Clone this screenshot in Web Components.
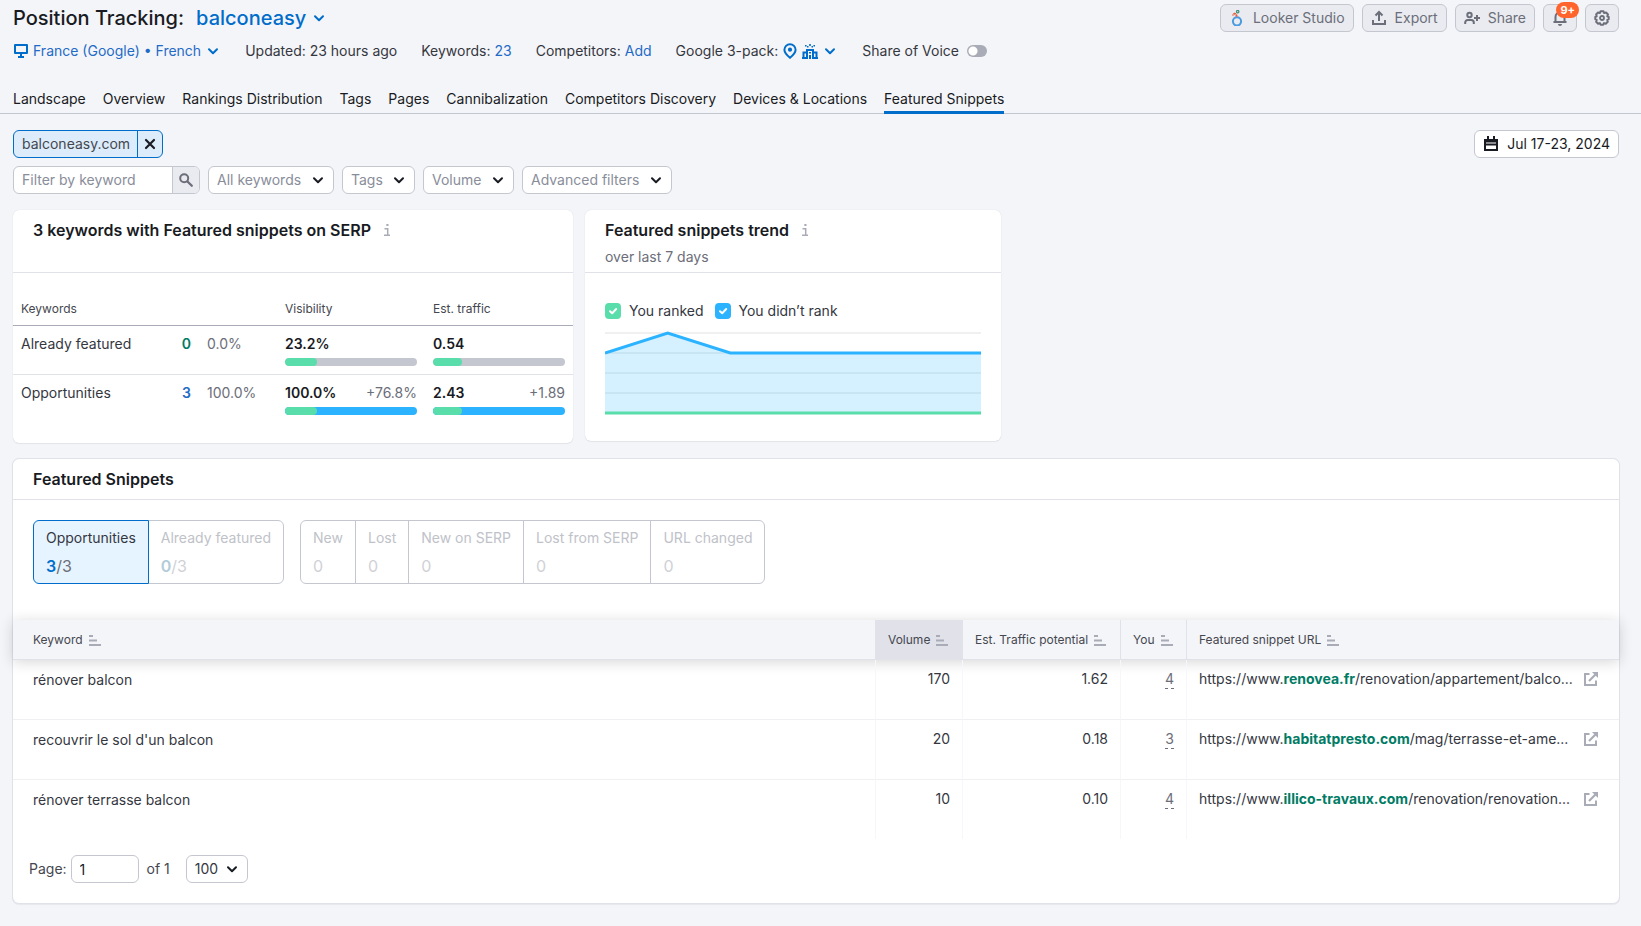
<!DOCTYPE html>
<html lang="en">
<head>
<meta charset="utf-8">
<meta name="viewport" content="width=device-width, initial-scale=1">
<title>Position Tracking: balconeasy</title>
<style>
  :root {
    --text: #191b23; --muted: #6c6e79; --hint: #898d9a; --icon: #a9abb6;
    --link: #006dca; --link-text: #1f6bc6; --line: #e0e1e9; --border: #c4c7cf; --bg: #f4f5f9;
    --green: #59ddaa; --blue: #2bb3ff; --green-text: #007c65;
  }
  body { margin: 0; background: var(--bg); color: var(--text); font: 14px/20px Inter, "Liberation Sans", sans-serif; }
</style>
</head>
<body>
<tracking-page></tracking-page>

<script>
const BASE = `
  *, *::before, *::after { box-sizing: border-box; }
  button, input, select { font: inherit; color: inherit; margin: 0; }
  button { background: none; border: 0; padding: 0; cursor: pointer; }
  a { color: var(--link-text); text-decoration: none; }
`;

function define(name, css, html, setup) {
  const template = document.createElement('template');
  template.innerHTML = `<style>${BASE}${css}</style>${html}`;
  customElements.define(name, class extends HTMLElement {
    constructor() {
      super();
      this.attachShadow({ mode: 'open' }).append(template.content.cloneNode(true));
    }
    connectedCallback() { if (setup) setup(this, this.shadowRoot); }
  });
}

const ICONS = {
  chevron: '<path d="M4 6.3 8 10.2 12 6.3" fill="none" stroke="currentColor" stroke-width="2" stroke-linecap="round" stroke-linejoin="round"/>',
  monitor: '<path d="M2 2h12v8H2z" fill="none" stroke="currentColor" stroke-width="2" stroke-linejoin="round"/><path d="M7 11h2v2h2v2H5v-2h2z" fill="currentColor"/>',
  pin: '<path d="M8 1.2a5.6 5.6 0 0 1 5.6 5.6C13.600 10.200 8 14.800 8 14.800S2.400 10.200 2.400 6.800A5.600 5.600 0 0 1 8 1.200Z" fill="none" stroke="currentColor" stroke-width="2"/><circle cx="8" cy="6.700" r="2.100" fill="currentColor"/>',
  building: '<path d="M1.500 16V9.500H5M11 9.500h3.500V16M5 16V7h6v9M0 15h6M10 15h6" fill="none" stroke="currentColor" stroke-width="2"/><path d="M7 9h2v1.500H7zM7 12h2v4H7z" fill="currentColor"/><path d="M7.200 1h1.600v2H7.200zM3 2h1.600v1.600H3zM11.400 2H13v1.600h-1.600zM5 3h1.500v1.500H5zM9.500 3H11v1.500H9.500z" fill="currentColor"/>',
  looker: '<circle cx="8" cy="11.300" r="4.100" fill="none" stroke="#4a9ae0" stroke-width="2"/><path d="M7.300 6.600C7.900 5.200 7.300 3.900 6 3.700 4.900 3.500 4 4.300 4.300 5.400" fill="none" stroke="#e8593b" stroke-width="1.900" stroke-dasharray="2.200 .6"/><circle cx="8.700" cy="1.700" r="1.200" fill="none" stroke="#3d8b78" stroke-width="1.200"/>',
  upload: '<path d="M2 10v4h12v-4M8 11V2.500M4.500 5.500 8 2l3.500 3.500" fill="none" stroke="currentColor" stroke-width="2"/>',
  share: '<circle cx="5.500" cy="5" r="2.200" fill="none" stroke="currentColor" stroke-width="2"/><path d="M1.200 14v-1.500a2.500 2.500 0 0 1 2.500-2.500h3.600a2.500 2.500 0 0 1 2.500 2.500V14M13 5v6M10 8h6" fill="none" stroke="currentColor" stroke-width="2"/>',
  bell: '<path d="M1.500 12h13M3.500 11.500V7a4.500 4.500 0 0 1 9 0v4.500" fill="none" stroke="currentColor" stroke-width="2"/><path d="M6 14h4a2 2 0 0 1-4 0z" fill="currentColor"/>',
  gear: '<path d="M6.500 1.300h3l.7 1.800 1.900-.6 1.900 2-.7 1.800 1.400.7v2.200l-1.400.7.5 1.900-2 1.900-1.800-.6-.7 1.600H6.600l-.7-1.600-1.800.6-2-1.900.6-1.900-1.400-.7V7l1.400-.7-.6-1.800 1.900-2 1.800.6z" fill="none" stroke="currentColor" stroke-width="2" stroke-linejoin="round"/><circle cx="8" cy="8" r="2" fill="none" stroke="currentColor" stroke-width="1.800"/>',
  close: '<path d="m4 4 8 8M12 4l-8 8" fill="none" stroke="currentColor" stroke-width="2.200" stroke-linecap="round"/>',
  search: '<circle cx="6.200" cy="6.200" r="4" fill="none" stroke="currentColor" stroke-width="2"/><path d="m9.500 9.500 4.300 4.300" stroke="currentColor" stroke-width="2.300" stroke-linecap="round"/>',
  calendar: '<path d="M2 4h12v10H2zM2 8.500h12" fill="none" stroke="currentColor" stroke-width="2"/><path d="M1 3h14v3.500H1zM4 0h2v4H4zM10 0h2v4h-2z" fill="currentColor"/>',
  info: '<path d="M7.300 2h2.200v2H7.300z" fill="currentColor"/><path d="M5.500 6.800h3.200v6.200M5 13.300h6" fill="none" stroke="currentColor" stroke-width="1.500"/>',
  sort: '<path d="M2 4h4M2 8.500h8M2 13h12" fill="none" stroke="currentColor" stroke-width="2"/>',
  external: '<path d="M6.500 3H2v11h11V9.500" fill="none" stroke="currentColor" stroke-width="2"/><path d="M6 10 13 3" stroke="currentColor" stroke-width="2.200"/><path d="M9 1h6v6z" fill="currentColor"/>'
};

define('ui-icon', `
  :host { display: inline-flex; flex: none; width: 16px; height: 16px; }
  svg { width: 16px; height: 16px; display: block; }
`, '<svg viewBox="0 0 16 16" aria-hidden="true"></svg>', (host, root) => {
  root.querySelector('svg').innerHTML = ICONS[host.getAttribute('name')] || '';
});

define('tool-button', `
  :host { display: block; position: relative; }
  button { display: flex; align-items: center; gap: 8px; height: 28px; padding: 0 8px; border: 1px solid var(--border); border-radius: 6px; background: #e9ebf0; color: var(--muted); white-space: nowrap; }
  :host([plain]) button { background: #fff; color: var(--text); }
  ::slotted([slot=badge]) { position: absolute; top: -2px; right: -2px; height: 16px; padding: 0 4px; border-radius: 8px; background: #ff642d; color: #fff; font: 700 11px/16px Inter, sans-serif; }
`, '<button type="button"><slot></slot></button><slot name="badge"></slot>', (host, root) => {
  const label = host.getAttribute('label');
  if (label) root.querySelector('button').setAttribute('aria-label', label);
});

define('select-box', `
  :host { display: inline-grid; align-items: center; color: var(--hint); --room: 31px; }
  :host([compact]) { --room: 28px; }
  select, ui-icon { grid-area: 1 / 1; }
  select { appearance: none; height: 28px; padding: 0 var(--room) 0 8px; border: 1px solid var(--border); border-radius: 6px; background: #fff; }
  ui-icon { justify-self: end; margin-right: 8px; color: var(--text); pointer-events: none; }
`, '<select></select><ui-icon name="chevron"></ui-icon>', (host, root) => {
  const select = root.querySelector('select');
  select.setAttribute('aria-label', host.getAttribute('label'));
  select.replaceChildren(new Option(host.getAttribute('value')));
});

define('page-header', `
  :host { display: block; padding: 4px 22px 0 13px; border-bottom: 1px solid var(--border); }
  .top, .tools, h1, .title, .meta, .item, .tabs { display: flex; align-items: center; }
  .top { justify-content: space-between; height: 28px; }
  h1 { margin: 0; font-size: 20px; line-height: 26px; font-weight: 500; gap: 12px; }
  .title { gap: 5px; font-weight: 500; color: var(--link); }
  .tools { gap: 8px; }
  .meta { gap: 24px; margin-top: 8px; line-height: 22px; white-space: nowrap; }
  .item { gap: 4px; color: #35373f; }
  .item.place { color: var(--link-text); }
  .item ui-icon { color: var(--link); }
  .switch { gap: 8px; }
  input { appearance: none; width: 20px; height: 12px; border-radius: 6px; background: radial-gradient(circle at 6px 6px, #fff 4px, #a9abb6 5px); }
  .tabs { gap: 17px; margin: 24px 0 -1px; white-space: nowrap; }
  .tabs a { height: 28px; line-height: 26px; color: var(--text); border-bottom: 3px solid transparent; }
  .tabs a[aria-current] { border-color: var(--link); }
`, `
  <div class="top">
    <h1>Position Tracking: <button class="title" type="button">balconeasy <ui-icon name="chevron"></ui-icon></button></h1>
    <div class="tools">
      <tool-button><ui-icon name="looker"></ui-icon>Looker Studio</tool-button>
      <tool-button><ui-icon name="upload"></ui-icon>Export</tool-button>
      <tool-button><ui-icon name="share"></ui-icon>Share</tool-button>
      <tool-button label="Notifications"><ui-icon name="bell"></ui-icon><span slot="badge">9+</span></tool-button>
      <tool-button label="Settings"><ui-icon name="gear"></ui-icon></tool-button>
    </div>
  </div>
  <div class="meta">
    <button class="item place" type="button"><ui-icon name="monitor"></ui-icon>France (Google) • French<ui-icon name="chevron"></ui-icon></button>
    <span class="item">Updated: 23 hours ago</span>
    <span class="item">Keywords: <a href="#keywords">23</a></span>
    <span class="item">Competitors: <a href="#competitors">Add</a></span>
    <button class="item" type="button">Google 3-pack: <ui-icon name="pin"></ui-icon><ui-icon name="building"></ui-icon><ui-icon name="chevron"></ui-icon></button>
    <label class="item switch">Share of Voice <input type="checkbox" role="switch"></label>
  </div>
  <nav class="tabs">
    <a href="#landscape">Landscape</a><a href="#overview">Overview</a><a href="#rankings">Rankings Distribution</a><a href="#tags">Tags</a><a href="#pages">Pages</a><a href="#cannibalization">Cannibalization</a><a href="#discovery">Competitors Discovery</a><a href="#devices">Devices &amp; Locations</a><a href="#snippets" aria-current="page">Featured Snippets</a>
  </nav>
`);

define('filter-bar', `
  :host { display: grid; gap: 8px; }
  .row { display: flex; align-items: center; gap: 8px; }
  .row > tool-button { margin-left: auto; }
  .chip { display: flex; height: 28px; line-height: 26px; border: 1px solid var(--link); border-radius: 6px; background: #dcecfa; color: #45474f; }
  .chip span { padding: 0 7px 0 8px; }
  .chip button { display: flex; align-items: center; padding: 0 4px; border-left: 1px solid var(--link); color: var(--text); }
  form { display: flex; height: 28px; border: 1px solid var(--border); border-radius: 6px; background: #fff; overflow: hidden; }
  input { width: 158px; border: 0; padding: 0 8px; background: none; outline: 0; }
  input::placeholder { color: var(--hint); opacity: 1; }
  form button { display: flex; align-items: center; padding: 0 5px; border-left: 1px solid var(--border); background: #e9ebf0; color: var(--muted); }
`, `
  <div class="row">
    <div class="chip"><span>balconeasy.com</span><button type="button" aria-label="Remove balconeasy.com"><ui-icon name="close"></ui-icon></button></div>
    <tool-button plain><ui-icon name="calendar"></ui-icon>Jul 17-23, 2024</tool-button>
  </div>
  <div class="row">
    <form><input type="text" placeholder="Filter by keyword" aria-label="Filter by keyword"><button type="button" aria-label="Search"><ui-icon name="search"></ui-icon></button></form>
    <select-box label="Keywords" value="All keywords"></select-box>
    <select-box label="Tags" value="Tags"></select-box>
    <select-box label="Volume" value="Volume"></select-box>
    <select-box label="Advanced filters" value="Advanced filters"></select-box>
  </div>
`);

define('info-card', `
  :host { display: block; background: #fff; border-radius: 6px; box-shadow: 0 0 1px rgba(25,27,35,.16), 0 1px 1px rgba(25,27,35,.06); }
  header { height: 63px; padding: 10px 20px 0; border-bottom: 1px solid var(--line); }
  h2 { display: flex; align-items: center; gap: 8px; margin: 0; font-size: 16px; line-height: 20px; font-weight: 600; }
  ui-icon { color: var(--icon); }
  p { margin: 7px 0 0; color: var(--muted); }
`, `<header><h2><slot name="title"></slot><ui-icon name="info"></ui-icon></h2><p><slot name="note"></slot></p></header><slot></slot>`);

define('share-bar', `
  :host { display: flex; height: 8px; margin-top: 4px; border-radius: 4px; overflow: hidden; background: var(--border); }
  :host([filled]) { background: var(--blue); }
  span { border-radius: 4px; background: var(--green); }
`, '<span></span>', (host, root) => { root.querySelector('span').style.width = host.getAttribute('value') + '%'; });

define('keyword-summary', `
  :host { display: block; padding: 20px 0; }
  table { width: 100%; table-layout: fixed; border-collapse: separate; border-spacing: 0; }
  th { height: 33px; padding: 0 8px; font-size: 12px; font-weight: 400; text-align: left; color: #45474f; border-bottom: 1px solid #a9abb6; }
  td { padding: 8px; vertical-align: top; border-bottom: 1px solid var(--line); color: #35373f; }
  tr:last-child td { border: 0; }
  .count { width: 30px; } .part { width: 78px; } .metric { width: 148px; }
  td.count { text-align: right; font-weight: 600; color: var(--green-text); }
  td.count.new { color: var(--link-text); }
  td.part, .gain { color: var(--muted); font-weight: 400; }
  b { display: flex; justify-content: space-between; font-weight: 600; color: var(--text); }
`, `
  <table>
    <thead><tr><th>Keywords</th><th class="count"></th><th class="part"></th><th class="metric">Visibility</th><th class="metric">Est. traffic</th></tr></thead>
    <tbody>
      <tr><td>Already featured</td><td class="count">0</td><td class="part">0.0%</td><td><b>23.2%</b><share-bar value="24"></share-bar></td><td><b>0.54</b><share-bar value="22"></share-bar></td></tr>
      <tr><td>Opportunities</td><td class="count new">3</td><td class="part">100.0%</td><td><b>100.0% <span class="gain">+76.8%</span></b><share-bar filled value="24"></share-bar></td><td><b>2.43 <span class="gain">+1.89</span></b><share-bar filled value="22"></share-bar></td></tr>
    </tbody>
  </table>
`);

define('trend-chart', `
  :host { display: block; padding: 28px 20px 26px; }
  .legend { display: flex; gap: 11px; margin-bottom: 10px; }
  label { display: flex; align-items: center; gap: 8px; color: #35373f; }
  .box { display: inline-grid; }
  .box > * { grid-area: 1 / 1; }
  input { appearance: none; width: 16px; height: 16px; border-radius: 4px; background: var(--green); }
  .blue input { background: var(--blue); }
  .box svg { width: 16px; height: 16px; pointer-events: none; }
  .plot { display: block; width: 100%; height: 84px; }
`, `
  <div class="legend">
    <label><span class="box"><input type="checkbox" checked><svg viewBox="0 0 16 16"><path d="m5 8.200 2.200 2L11.200 6" fill="none" stroke="#fff" stroke-width="2" stroke-linecap="round" stroke-linejoin="round"/></svg></span>You ranked</label>
    <label class="blue"><span class="box"><input type="checkbox" checked><svg viewBox="0 0 16 16"><path d="m5 8.200 2.200 2L11.200 6" fill="none" stroke="#fff" stroke-width="2" stroke-linecap="round" stroke-linejoin="round"/></svg></span>You didn’t rank</label>
  </div>
  <svg class="plot" viewBox="0 0 376 84" preserveAspectRatio="none" role="img" aria-label="Featured snippets over last 7 days">
    <path d="M0 2h376M0 22h376M0 42h376M0 62h376M0 82h376" stroke="#f0f0f1" stroke-width="2"/>
    <path d="M0 22 62.700 2 125.300 22H376V82H0Z" fill="#2bb3ff" fill-opacity=".2"/>
    <path d="M0 42h376M0 62h376M4 22h118" stroke="#c8e5f4" stroke-width="2"/>
    <path d="M0 22 62.700 2 125.300 22H376" fill="none" stroke="#2bb3ff" stroke-width="3"/>
    <path d="M0 82h376" stroke="#59ddaa" stroke-width="3"/>
  </svg>
`);

define('segment-groups', `
  :host { display: flex; gap: 16px; padding: 20px 20px 36px; }
  .group { display: flex; }
  button { display: grid; gap: 8px; padding: 7px 12px; margin-left: -1px; border: 1px solid var(--border); text-align: left; white-space: nowrap; color: #c0c2c9; line-height: 20px; }
  button:first-child { margin-left: 0; border-radius: 6px 0 0 6px; }
  button:last-child { border-radius: 0 6px 6px 0; }
  .value { font-size: 16px; color: #d0d1d6; }
  .value b { font-weight: 600; color: #b2ccda; }
  .on { position: relative; border-color: var(--link); background: #e6f4ff; color: #35373f; }
  .on .value { color: var(--muted); }
  .on b { color: var(--link); }
`, `
  <div class="group">
    <button type="button" class="on" aria-pressed="true"><span>Opportunities</span><span class="value"><b>3</b>/3</span></button>
    <button type="button"><span>Already featured</span><span class="value"><b>0</b>/3</span></button>
  </div>
  <div class="group">
    <button type="button"><span>New</span><span class="value">0</span></button>
    <button type="button"><span>Lost</span><span class="value">0</span></button>
    <button type="button"><span>New on SERP</span><span class="value">0</span></button>
    <button type="button"><span>Lost from SERP</span><span class="value">0</span></button>
    <button type="button"><span>URL changed</span><span class="value">0</span></button>
  </div>
`);

const ROWS = [
  ['rénover balcon', '170', '1.62', '4', 'renovea.fr', '/renovation/appartement/balco...'],
  ["recouvrir le sol d'un balcon", '20', '0.18', '3', 'habitatpresto.com', '/mag/terrasse-et-ame...'],
  ['rénover terrasse balcon', '10', '0.10', '4', 'illico-travaux.com', '/renovation/renovation...']
];
const sortable = (label) => `<button type="button">${label}<ui-icon name="sort"></ui-icon></button>`;

define('snippets-table', `
  :host { display: block; }
  table { width: 100%; table-layout: fixed; border-collapse: separate; border-spacing: 0; }
  thead { box-shadow: 0 2px 14px rgba(25,27,35,.18); }
  th { height: 40px; padding: 0 12px; background: var(--bg); border-bottom: 1px solid var(--line); border-left: 1px solid var(--line); font-weight: 400; text-align: left; }
  th.sorted { background: #e0e1e9; }
  th:first-child, td:first-child { padding-left: 20px; border-left: 0; }
  th button { display: flex; align-items: center; gap: 4px; font-size: 12px; line-height: 16px; color: #45474f; white-space: nowrap; }
  th ui-icon, td ui-icon { color: var(--icon); }
  .volume { width: 87px; } .traffic { width: 158px; } .you { width: 66px; } .url { width: 433px; }
  td { height: 60px; padding: 10px 12px; vertical-align: top; color: #35373f; border-bottom: 1px solid #f0f0f2; border-left: 1px solid #f7f7f9; }
  td + td { padding-top: 9px; }
  tr:last-child td { height: 59px; border-bottom: 0; }
  .num { text-align: right; }
  .rank { padding-bottom: 1px; color: var(--muted); border-bottom: 1px dashed var(--muted); }
  td:last-child { padding-right: 20px; }
  td a { display: flex; align-items: center; justify-content: space-between; color: #35373f; white-space: nowrap; }
  td b { font-weight: 700; color: var(--green-text); }
`, `
  <table>
    <thead><tr><th>${sortable('Keyword')}</th><th class="volume sorted">${sortable('Volume')}</th><th class="traffic">${sortable('Est. Traffic potential')}</th><th class="you">${sortable('You')}</th><th class="url">${sortable('Featured snippet URL')}</th></tr></thead>
    <tbody>${ROWS.map(([keyword, volume, traffic, rank, domain, path]) => `
      <tr><td>${keyword}</td><td class="num">${volume}</td><td class="num">${traffic}</td><td class="num"><span class="rank">${rank}</span></td><td><a href="#${domain}"><span>https://www.<b>${domain}</b>${path}</span><ui-icon name="external"></ui-icon></a></td></tr>`).join('')}
    </tbody>
  </table>
`);

define('page-picker', `
  :host { display: flex; align-items: center; padding: 16px 16px 20px; color: #45474f; }
  label { display: flex; align-items: center; gap: 4px; }
  input { width: 68px; height: 28px; padding: 0 8px; border: 1px solid var(--border); border-radius: 6px; background: #fff; color: var(--text); }
  span { margin: 0 16px 0 8px; }
  select-box { color: #35373f; }
`, `<label>Page: <input type="text" value="1"></label><span>of 1</span><select-box compact label="Rows per page" value="100"></select-box>`);

define('tracking-page', `
  :host { display: block; padding-bottom: 23px; }
  main { display: grid; padding: 16px 22px 0 13px; }
  .cards { display: grid; grid-template-columns: minmax(0, 560fr) minmax(0, 416fr) minmax(0, 606fr); gap: 12px; align-items: start; margin: 16px 0; }
  section { background: #fff; border-radius: 6px; box-shadow: 0 0 0 1px var(--line), 0 1px 1px 1px rgba(25,27,35,.06); }
  h2 { margin: 0; padding: 0 20px; font-size: 16px; line-height: 40px; font-weight: 600; border-bottom: 1px solid var(--line); }
`, `
  <page-header></page-header>
  <main>
    <filter-bar></filter-bar>
    <div class="cards">
      <info-card><span slot="title">3 keywords with Featured snippets on SERP</span><keyword-summary></keyword-summary></info-card>
      <info-card><span slot="title">Featured snippets trend</span><span slot="note">over last 7 days</span><trend-chart></trend-chart></info-card>
    </div>
    <section>
      <h2>Featured Snippets</h2>
      <segment-groups></segment-groups>
      <snippets-table></snippets-table>
      <page-picker></page-picker>
    </section>
  </main>
`);
</script>
</body>
</html>
